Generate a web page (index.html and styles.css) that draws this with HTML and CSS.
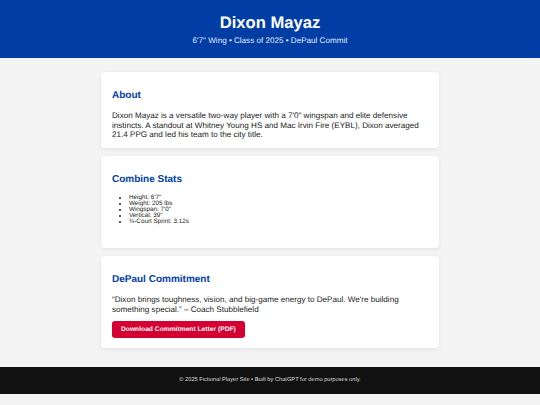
FILE: index.html
```html
<!DOCTYPE html>
<html lang="en">
<head>
<meta charset="utf-8">
<title>Dixon Mayaz</title>
<link rel="stylesheet" href="styles.css">
</head>
<body>
<header class="hero">
  <h1 class="hero-title">Dixon Mayaz</h1>
  <p class="hero-sub">6'7" Wing • Class of 2025 • DePaul Commit</p>
</header>
<main class="content">
  <section class="card">
    <h2 class="card-title">About</h2>
    <p class="card-text">Dixon Mayaz is a versatile two-way player with a 7'0" wingspan and elite defensive instincts. A standout at Whitney Young HS and Mac Irvin Fire (EYBL), Dixon averaged 21.4 PPG and led his team to the city title.</p>
  </section>
  <section class="card card-stats">
    <h2 class="card-title">Combine Stats</h2>
    <ul class="stats">
      <li>Height: 6'7"</li>
      <li>Weight: 205 lbs</li>
      <li>Wingspan: 7'0"</li>
      <li>Vertical: 39"</li>
      <li>¾-Court Sprint: 3.12s</li>
    </ul>
  </section>
  <section class="card">
    <h2 class="card-title">DePaul Commitment</h2>
    <p class="card-text">“Dixon brings toughness, vision, and big-game energy to DePaul. We're building something special.” – Coach Stubblefield</p>
    <a class="btn" href="#">Download Commitment Letter (PDF)</a>
  </section>
</main>
<footer class="footer">
  <p>© 2025 Fictional Player Site • Built by ChatGPT for demo purposes only.</p>
</footer>
</body>
</html>
```
FILE: styles.css
```css
html {
  background: #f4f4f4;
}
body {
  margin: 0;
  font-family: "Liberation Sans", Arial, sans-serif;
  color: #222;
  background: #f4f4f4;
  text-rendering: geometricPrecision;
}
.hero {
  background: #003da5;
  color: #fff;
  text-align: center;
  padding: 13px 0 12px;
}
.hero-title {
  margin: 0;
  font-size: 16.6px;
  line-height: 20px;
  font-weight: bold;
}
.hero-sub {
  margin: 2px 0 0;
  font-size: 8.1px;
  line-height: 11px;
  color: #e6ecf8;
}
.content {
  display: flex;
  flex-direction: column;
  gap: 8px;
  width: 338px;
  margin: 0 auto;
  padding: 14px 0 19px;
}
.card {
  background: #fff;
  border-radius: 4px;
  box-shadow: 0 1px 4px rgba(0, 0, 0, 0.08);
  padding: 11px 11px 8px;
}
.card-title {
  margin: 7px 0 9px;
  font-size: 10px;
  line-height: 12px;
  color: #003da5;
}
.card-text {
  margin: 0;
  font-size: 8.1px;
  line-height: 9.7px;
  color: #222;
}
.stats {
  margin: 0 0 15px;
  padding-left: 17px;
  font-size: 6.3px;
  line-height: 6px;
  color: #222;
}
.btn {
  display: inline-block;
  margin: 6px 0 2px;
  padding: 0 9px;
  height: 17px;
  line-height: 17px;
  background: #d50032;
  color: #fff;
  font-size: 6.7px;
  font-weight: bold;
  text-decoration: none;
  border-radius: 3px;
}
.footer {
  background: #111;
  color: #ddd;
  text-align: center;
  height: 27px;
  display: flex;
  align-items: center;
  justify-content: center;
}
.footer p {
  margin: 0;
  font-size: 5.7px;
}
```
